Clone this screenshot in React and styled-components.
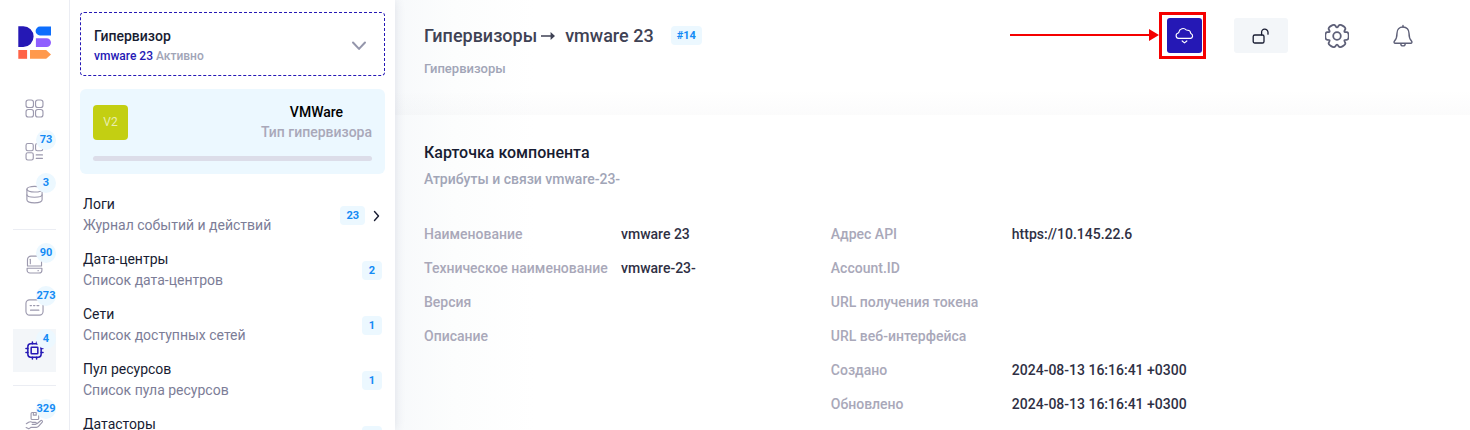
// LIBRARY IMPORTS
import React from 'react';
import styled, { createGlobalStyle } from 'styled-components';

// COLOURS
const colors = {
  primary: '#2518b5',
  dark: '#181c32',
  heading: '#3f4254',
  value: '#2f3044',
  muted: '#a1a5b7',
  label: '#a9a8b9',
  sub: '#7c7d97',
  icon: '#9c99ae',
  info: '#148bf5',
  infoBg: '#ecf8ff',
  grey: '#f3f6f9',
  line: '#ebedf3',
};

const GlobalStyle = createGlobalStyle`
  * {
    box-sizing: border-box;
  }

  body {
    margin: 0;
    background-color: white;
    color: ${colors.dark};
    font-family: Roboto, "Noto Sans", sans-serif;
    font-size: 14px;
    line-height: 20px;
  }

  a {
    color: inherit;
    text-decoration: none;
  }

  button {
    font: inherit;
    color: inherit;
    padding: 0;
    border: none;
    background: none;
    cursor: pointer;
  }

  svg {
    display: block;
  }
`;

// STYLED COMPONENTS
const Shell = styled.div`
  display: flex;
  height: 100vh;
  overflow: hidden;
`;

const Rail = styled.nav`
  flex: none;
  width: 70px;
  padding: 26px 13px 0;
  border-right: 1px solid ${colors.line};
  overflow-y: auto;
  scrollbar-width: none;
`;

const LogoLink = styled.a`
  display: flex;
  justify-content: center;
  margin-bottom: 28px;
`;

const RailItem = styled.a`
  position: relative;
  display: flex;
  align-items: center;
  justify-content: center;
  height: 43px;
  color: ${props => props.$active ? colors.primary : colors.icon};
  background-color: ${props => props.$active ? colors.grey : 'transparent'};
`;

const RailBadge = styled.span`
  position: absolute;
  top: 0;
  right: 0;
  width: 20px;
  height: 20px;
  border-radius: 50%;
  background-color: ${colors.infoBg};
  color: ${colors.info};
  display: flex;
  align-items: center;
  justify-content: center;
  font-size: 11px;
  font-weight: 700;
`;

const RailDivider = styled.hr`
  height: 1px;
  margin: 13px 0;
  border: none;
  background-color: ${colors.line};
`;

const Panel = styled.aside`
  flex: none;
  width: 325px;
  padding: 12px 10px 0;
  z-index: 1;
  background-color: white;
  box-shadow: 0 0 10px rgba(40, 50, 90, 0.12);
  clip-path: inset(0 -40px 0 0);
  overflow-y: auto;
  scrollbar-width: none;
`;

const Selector = styled.button`
  display: flex;
  align-items: center;
  justify-content: space-between;
  width: 100%;
  height: 64px;
  padding: 3px 16px 0 13px;
  border: 1px dashed ${colors.primary};
  border-radius: 4px;
  text-align: left;
`;

const SelectorTitle = styled.span`
  display: block;
  font-weight: 500;
`;

const SelectorStatus = styled.span`
  display: block;
  color: ${colors.muted};
  font-size: 12px;
  font-weight: 500;

  b {
    color: ${colors.primary};
    font-weight: 500;
  }
`;

const TypeCard = styled.section`
  margin-top: 13px;
  padding: 13px;
  border-radius: 6px;
  background-color: ${colors.infoBg};
`;

const TypeRow = styled.div`
  display: flex;
  align-items: center;
  justify-content: space-between;
`;

const TypeSymbol = styled.span`
  display: flex;
  align-items: center;
  justify-content: center;
  width: 35px;
  height: 35px;
  border-radius: 4px;
  background-color: #c3cf12;
  color: #e8edae;
  font-size: 12px;
`;

const TypeText = styled.div`
  color: ${colors.label};
  font-weight: 500;
  text-align: center;

  strong {
    display: block;
    color: black;
    font-weight: 500;
  }
`;

const TypeBar = styled.div`
  height: 5px;
  margin-top: 14px;
  border-radius: 3px;
  background-color: #dcdde9;
`;

const List = styled.nav`
  margin-top: 14px;
  padding: 0 3px;
`;

const ListItem = styled.a`
  display: flex;
  align-items: center;
  padding: 6px 0 7px;
  line-height: 21px;
`;

const ListText = styled.span`
  flex: 1;
  color: ${colors.dark};

  small {
    display: block;
    color: ${colors.sub};
    font-size: 14px;
  }
`;

const Badge = styled.span`
  min-width: 20px;
  padding: 0 6px;
  border-radius: 4px;
  background-color: ${colors.infoBg};
  color: ${colors.info};
  font-size: 11px;
  font-weight: 700;
  line-height: 19px;
  text-align: center;
`;

const Main = styled.main`
  flex: 1;
  min-width: 0;
  background: linear-gradient(to right, #f7f9fb, #fcfdfd 60px, white 140px);
`;

const Header = styled.header`
  display: flex;
  align-items: flex-start;
  justify-content: space-between;
  height: 115px;
  padding: 18px 50px 0 29px;
  background: linear-gradient(to bottom, transparent 90px, rgba(60, 60, 80, 0.018));
`;

const TitleRow = styled.div`
  display: flex;
  align-items: center;
  gap: 17px;
  height: 35px;
`;

const Title = styled.h1`
  display: flex;
  align-items: center;
  margin: 0;
  color: ${colors.heading};
  font-size: 18px;
  font-weight: 500;

  svg {
    margin: 0 10px 0 4px;
  }
`;

const Breadcrumb = styled.a`
  display: block;
  margin-top: 6px;
  color: ${colors.muted};
  font-size: 13px;
  font-weight: 500;
`;

const Actions = styled.div`
  display: flex;
  gap: 32px;
`;

const ActionButton = styled.button`
  display: flex;
  align-items: center;
  justify-content: center;
  width: ${props => props.$wide ? '54px' : '34px'};
  height: 35px;
  border-radius: 3px;
  background-color: ${props => props.$wide ? colors.grey : 'transparent'};
  color: ${props => props.$wide ? colors.dark : '#5e6078'};
`;

const CloudButton = styled(ActionButton)`
  width: 35px;
  background-color: ${colors.primary};
  color: white;
`;

const Highlight = styled.div`
  position: relative;
`;

const HighlightFrame = styled.span`
  position: absolute;
  top: -6px;
  left: -8px;
  width: 47px;
  height: 47px;
  border: 3px solid #f50000;
  pointer-events: none;
`;

const HighlightArrow = styled.svg`
  position: absolute;
  top: 11px;
  right: 43px;
`;

const Card = styled.section`
  padding: 28px 29px;
`;

const CardTitle = styled.h2`
  margin: 0;
  font-size: 16px;
  font-weight: 500;
`;

const CardSubtitle = styled.p`
  margin: 6px 0 0;
  color: ${colors.muted};
  font-weight: 500;
`;

const Columns = styled.div`
  display: grid;
  grid-template-columns: 2fr 3fr;
  align-items: start;
  margin-top: 28px;
`;

const Table = styled.table`
  width: 100%;
  table-layout: fixed;
  border-collapse: collapse;
`;

const LabelCell = styled.th`
  width: ${props => props.$width};
  height: 34px;
  padding: 0;
  color: ${colors.label};
  font-weight: 500;
  text-align: left;
  white-space: nowrap;
`;

const ValueCell = styled.td`
  padding: 0;
  color: ${colors.value};
  font-weight: 500;
`;

// ICONS
const Icon = ({ size = 20, box = size, width = 1.2, children }) => (
  <svg width={size} height={size} viewBox={`0 0 ${box} ${box}`} fill="none" stroke="currentColor"
    strokeWidth={width} strokeLinecap="round" strokeLinejoin="round" aria-hidden="true">
    {children}
  </svg>
);

const RailIcon = props => <Icon size={19} box={20} {...props} />;

const Logo = () => (
  <svg width="33" height="33" viewBox="0 0 33 33" aria-hidden="true">
    <path d="M0.3 0.3h5a10.3 10.3 0 0 1 0 20.6h-5z" fill="#2518b5" />
    <path d="M22 0.6h11v8.8H22a4.4 4.4 0 0 1 0-8.8z" fill="#0d6efd" />
    <path d="M17.9 12.2h10.700a4.400 4.400 0 0 1 0 8.800H17.900z" fill="#8f5fff" />
    <path d="M0.3 24h8.800v8.800H0.300z" fill="#ff6347" />
    <path d="M12 24h16.200l4.800 4.400-4.800 4.400H12z" fill="#ff994d" />
  </svg>
);

const GridIcon = () => (
  <RailIcon>
    <rect x="1.1" y="1.1" width="7.8" height="7.8" rx="2.4" />
    <rect x="11.1" y="1.1" width="7.8" height="7.8" rx="2.4" />
    <rect x="1.1" y="11.1" width="7.8" height="7.8" rx="2.4" />
    <rect x="11.1" y="11.1" width="7.8" height="7.8" rx="2.4" />
  </RailIcon>
);

const WidgetsIcon = () => (
  <RailIcon>
    <rect x="1.1" y="1.6" width="7.6" height="7.6" rx="1.8" />
    <rect x="11.1" y="1.6" width="7.6" height="7.6" rx="1.8" />
    <rect x="1.1" y="11.3" width="7.6" height="7.6" rx="1.8" />
    <path d="M11.8 13.6h6.6M11.8 17.2h6.6" />
  </RailIcon>
);

const DatabaseIcon = () => (
  <RailIcon>
    <ellipse cx="10" cy="4.4" rx="8" ry="3" />
    <path d="M2 4.400v11.200c0 1.800 3.600 3.200 8 3.200s8-1.400 8-3.200V4.400" />
    <path d="M2 10.300c0 1.500 3.600 2.600 8 2.600s8-1.100 8-2.600" />
  </RailIcon>
);

const ServerIcon = () => (
  <RailIcon>
    <path d="M2.600 11.600V5a3.800 3.800 0 0 1 3.800-3.800h7.200A3.800 3.800 0 0 1 17.400 5v6.600z" />
    <path d="M5.600 4.600v4.600" />
    <path d="M2.200 14h15.600v2a3 3 0 0 1-3 3H5.200a3 3 0 0 1-3-3z" />
    <path d="M13.700 16.500h0.300" />
  </RailIcon>
);

const NoteIcon = () => (
  <RailIcon>
    <rect x="1" y="2" width="18" height="16" rx="3.8" />
    <path d="M5.400 8h1.400M9 8h1.400M12.600 8h2M5.800 12.800h8.800" />
  </RailIcon>
);

const ChipIcon = () => (
  <RailIcon width={1.6}>
    <rect x="3" y="3" width="14" height="14" rx="3" />
    <rect x="6.5" y="6.500" width="7" height="7" rx="0.6" />
    <path d="M7.800 3V1M12.200 3V1M7.800 19V17M12.200 19V17M3 7.800H1M3 12.200H1M19 7.800H17M19 12.200H17" />
  </RailIcon>
);

const HandIcon = () => (
  <RailIcon>
    <rect x="6.400" y="1.600" width="8" height="7.400" rx="1.200" />
    <path d="M8.800 1.800v2.600h3V1.800" />
    <path d="M1.400 13.400l2.400-1.600c1.400-.7 3-.5 4.200.2h3c1.300 0 1.500 2-.1 2.100H7.600" />
    <path d="M12.600 13.400l3.800-3.200c1-.8 2.600.2 1.800 1.400l-4 4.600c-.6.7-1.200 1-2.200 1H6.400L4 18.800 1.200 17.400" />
  </RailIcon>
);

const CloudIcon = () => (
  <Icon size={19} box={18} width={1.1}>
    <path d="M3.400 11.700a2.600 2.600 0 0 1-.4-5.1c.4-.2.6-.4.7-.9a4 4 0 0 1 6.900-2c.5.4.9.3 1.500.3 1.700.1 2.600 1.300 2.700 2.600 0 .4.2.6.600.8a2.300 2.300 0 0 1-.600 4.300z" />
    <path d="M6.800 14.200L9 16l2.200-1.800" />
  </Icon>
);

const UnlockIcon = () => (
  <Icon size={18} width={1.3}>
    <rect x="1.200" y="8" width="10.800" height="8" rx="1.600" />
    <path d="M9.600 7.800V5.600a3.200 3.200 0 0 1 6.400-.4v2" />
  </Icon>
);

// six rounded teeth, smoothed through the midpoints of the corner points
const gearPath = () => {
  const points = [];
  for (let i = 0; i < 6; i++) {
    [[8.6, -26], [12.3, -18], [12.3, 18], [8.6, 26]].forEach(([radius, offset]) => {
      const angle = (i * 60 + offset) * Math.PI / 180;
      points.push([12 + radius * Math.cos(angle), 12 + radius * Math.sin(angle)]);
    });
  }
  const middle = (a, b) => `${((a[0] + b[0]) / 2).toFixed(2)} ${((a[1] + b[1]) / 2).toFixed(2)}`;
  const curves = points.map((point, i) =>
    `Q${point[0].toFixed(2)} ${point[1].toFixed(2)} ${middle(point, points[(i + 1) % points.length])}`
  );
  return `M${middle(points[points.length - 1], points[0])}${curves.join('')}Z`;
};

const GearIcon = () => (
  <Icon size={24} width={1.8}>
    <path d={gearPath()} />
    <circle cx="12" cy="12" r="3.8" />
  </Icon>
);

const BellIcon = () => (
  <Icon size={24} width={1.4}>
    <path d="M12 3c-3.700 0-6 2.700-6 6.200 0 3.800-.8 6-2.500 7.800-.8.900-.5 2.300.8 2.300h15.400c1.300 0 1.600-1.400.8-2.300-1.700-1.800-2.500-4-2.500-7.800C18 5.700 15.700 3 12 3z" />
    <path d="M12 1.400V3M9.800 19.700a2.200 2.200 0 0 0 4.400 0" />
  </Icon>
);

// DATA
const railGroups = [
  [
    { label: 'Панель', icon: <GridIcon /> },
    { label: 'Сервисы', icon: <WidgetsIcon />, count: 73 },
    { label: 'Базы данных', icon: <DatabaseIcon />, count: 3 },
  ],
  [
    { label: 'Серверы', icon: <ServerIcon />, count: 90 },
    { label: 'Записи', icon: <NoteIcon />, count: 273 },
    { label: 'Гипервизоры', icon: <ChipIcon />, count: 4, active: true },
  ],
  [
    { label: 'Заказы', icon: <HandIcon />, count: 329 },
  ],
];

const sections = [
  { title: 'Логи', text: 'Журнал событий и действий', count: 23, active: true },
  { title: 'Дата-центры', text: 'Список дата-центров', count: 2 },
  { title: 'Сети', text: 'Список доступных сетей', count: 1 },
  { title: 'Пул ресурсов', text: 'Список пула ресурсов', count: 1 },
  { title: 'Датасторы', text: 'Список датасторов', count: 1 },
];

const mainAttributes = [
  ['Наименование', 'vmware 23'],
  ['Техническое наименование', 'vmware-23-'],
  ['Версия', ''],
  ['Описание', ''],
];

const extraAttributes = [
  ['Адрес API', 'https://10.145.22.6'],
  ['Account.ID', ''],
  ['URL получения токена', ''],
  ['URL веб-интерфейса', ''],
  ['Создано', '2024-08-13 16:16:41 +0300'],
  ['Обновлено', '2024-08-13 16:16:41 +0300'],
];

const AttributeTable = ({ rows, labelWidth }) => (
  <Table>
    <tbody>
      {rows.map(([label, value]) => (
        <tr key={label}>
          <LabelCell scope="row" $width={labelWidth}>{label}</LabelCell>
          <ValueCell>{value}</ValueCell>
        </tr>
      ))}
    </tbody>
  </Table>
);

const SideRail = () => (
  <Rail>
    <LogoLink href="#" aria-label="Главная"><Logo /></LogoLink>
    {railGroups.map((group, index) => (
      <React.Fragment key={index}>
        {index > 0 && <RailDivider />}
        {group.map(item => (
          <RailItem key={item.label} href="#" aria-label={item.label} $active={item.active}>
            {item.icon}
            {item.count && <RailBadge>{item.count}</RailBadge>}
          </RailItem>
        ))}
      </React.Fragment>
    ))}
  </Rail>
);

const SidePanel = () => (
  <Panel>
    <Selector type="button">
      <span>
        <SelectorTitle>Гипервизор</SelectorTitle>
        <SelectorStatus><b>vmware 23</b> Активно</SelectorStatus>
      </span>
      <Icon size={18} width={2}><path d="M3 5.500l6 6.400 6-6.400" stroke="#9496ab" /></Icon>
    </Selector>

    <TypeCard>
      <TypeRow>
        <TypeSymbol>V2</TypeSymbol>
        <TypeText><strong>VMWare</strong>Тип гипервизора</TypeText>
      </TypeRow>
      <TypeBar />
    </TypeCard>

    <List>
      {sections.map(item => (
        <ListItem key={item.title} href="#">
          <ListText>{item.title}<small>{item.text}</small></ListText>
          <Badge>{item.count}</Badge>
          {item.active && <Icon size={17} width={1.4}><path d="M9.500 4.500l4 4.500-4 4.500" /></Icon>}
        </ListItem>
      ))}
    </List>
  </Panel>
);

const App = () => (
  <Shell>
    <GlobalStyle />
    <SideRail />
    <SidePanel />
    <Main>
      <Header>
        <div>
          <TitleRow>
            <Title>
              Гипервизоры
              <svg width="14" height="10" viewBox="0 0 14 10" aria-hidden="true">
                <path d="M0 4.200h9.600V1L14 5 9.600 9V5.800H0z" fill="currentColor" />
              </svg>
              vmware 23
            </Title>
            <Badge>#14</Badge>
          </TitleRow>
          <Breadcrumb href="#">Гипервизоры</Breadcrumb>
        </div>
        <Actions>
          <Highlight>
            <CloudButton type="button" aria-label="Облако"><CloudIcon /></CloudButton>
            <HighlightFrame />
            <HighlightArrow width="149" height="12" viewBox="0 0 149 12" aria-hidden="true">
              <path d="M0 5h139V0l10 6-10 6V7H0z" fill="#f50000" />
            </HighlightArrow>
          </Highlight>
          <ActionButton type="button" $wide aria-label="Разблокировать"><UnlockIcon /></ActionButton>
          <ActionButton type="button" aria-label="Настройки"><GearIcon /></ActionButton>
          <ActionButton type="button" aria-label="Уведомления"><BellIcon /></ActionButton>
        </Actions>
      </Header>

      <Card>
        <CardTitle>Карточка компонента</CardTitle>
        <CardSubtitle>Атрибуты и связи vmware-23-</CardSubtitle>
        <Columns>
          <AttributeTable rows={mainAttributes} labelWidth="197px" />
          <AttributeTable rows={extraAttributes} labelWidth="181px" />
        </Columns>
      </Card>
    </Main>
  </Shell>
);

export default App;
